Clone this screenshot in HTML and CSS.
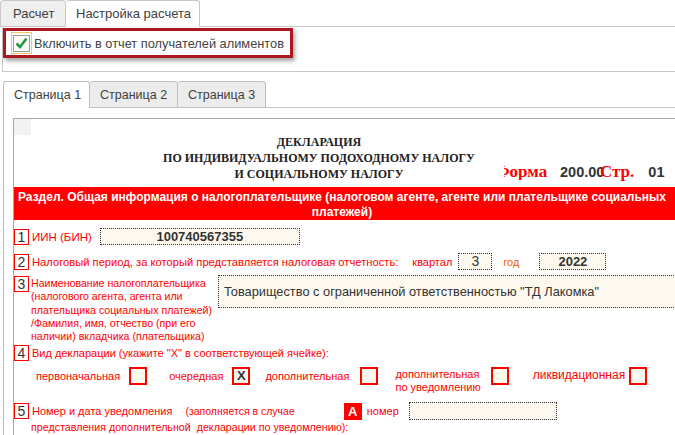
FILE: index.html
```html
<!DOCTYPE html>
<html lang="ru">
<head>
  <meta charset="UTF-8">
  <title>Декларация 200.00</title>
  <link rel="stylesheet" href="styles.css">
</head>
<body>
  <div class="window">
    <!-- верхние вкладки -->
    <div class="top-tabs">
      <div class="tab">Расчет</div>
      <div class="tab active">Настройка расчета</div>
      <div class="tab-fill"></div>
    </div>

    <div class="settings">
      <div class="highlight">
        <span class="check">
          <svg width="17" height="17" viewBox="0 0 17 17">
            <rect x="0.5" y="0.5" width="16" height="16" fill="#fff" stroke="#9a9a9a"/>
            <path d="M3.5 8.5 L7 12 L13.5 3.5" fill="none" stroke="#1f9a3c" stroke-width="2.6"/>
          </svg>
        </span>
        <span class="check-label">Включить в отчет получателей алиментов</span>
      </div>
    </div>

    <!-- вкладки страниц -->
    <div class="page-tabs">
      <div class="ptab active">Страница 1</div>
      <div class="ptab">Страница 2</div>
      <div class="ptab">Страница 3</div>
      <div class="tab-fill"></div>
    </div>

    <div class="page-panel">
      <div class="form">
        <div class="corner"></div>
        <div class="title">
          <div>ДЕКЛАРАЦИЯ</div>
          <div>ПО ИНДИВИДУАЛЬНОМУ ПОДОХОДНОМУ НАЛОГУ</div>
          <div class="title-last">
            <span>И СОЦИАЛЬНОМУ НАЛОГУ</span>
            <span class="form-no">
              <span class="form-word"><span class="form-word-in">Форма</span></span>
              <span class="form-val">200.00</span>
              <span class="form-str">Стр.</span>
              <span class="form-page">01</span>
            </span>
          </div>
        </div>

        <div class="section-bar">Раздел. Общая информация о налогоплательщике (налоговом агенте, агенте или плательщике социальных платежей)</div>

        <div class="row row-1">
          <span class="num">1</span>
          <span class="lbl lbl-big">ИИН (БИН)</span>
          <span class="field iin">100740567355</span>
        </div>

        <div class="row row-2">
          <span class="num">2</span>
          <span class="lbl period">Налоговый период, за который представляется налоговая отчетность:</span>
          <span class="lbl kv">квартал</span>
          <span class="field quarter">3</span>
          <span class="lbl year-lbl">год</span>
          <span class="field year">2022</span>
        </div>

        <div class="row row-3">
          <span class="num">3</span>
          <span class="lbl name-lbl">Наименование налогоплательщика<br>(налогового агента, агента или<br>плательщика социальных платежей)<br>/Фамилия, имя, отчество (при его<br>наличии) вкладчика (плательщика)</span>
          <span class="field name">Товарищество с ограниченной ответственностью "ТД Лакомка"</span>
        </div>

        <div class="row row-4">
          <span class="num">4</span>
          <span class="lbl">Вид декларации (укажите "X" в соответствующей ячейке):</span>
        </div>

        <div class="kinds">
          <span class="lbl k1">первоначальная</span>
          <span class="mark"></span>
          <span class="lbl k2">очередная</span>
          <span class="mark">X</span>
          <span class="lbl k3">дополнительная</span>
          <span class="mark"></span>
          <span class="lbl k4">дополнительная<br>по уведомлению</span>
          <span class="mark"></span>
          <span class="lbl k5">ликвидационная</span>
          <span class="mark"></span>
        </div>

        <div class="row row-5">
          <span class="num">5</span>
          <span class="lbl notice-lbl">Номер и дата уведомления</span>
          <span class="lbl note">(заполняется в случае</span>
          <span class="letter">А</span>
          <span class="lbl nomer">номер</span>
          <span class="field notice"></span>
        </div>
        <div class="row row-5b">
          <span class="lbl note2">представления дополнительной&nbsp; декларации по уведомлению):</span>
          <span class="under"></span>
          <span class="dots"></span>
        </div>
      </div>
    </div>
  </div>
</body>
</html>
```

FILE: styles.css
```css
/* базовые настройки */
body {
  margin: 0;
  padding: 0;
  font-family: "Liberation Sans", Arial, sans-serif;
  color: #333;
  background-color: #fff;
}

.window {
  width: 675px;
  height: 435px;
  overflow: hidden;
}

/* верхние вкладки */
.top-tabs {
  display: flex;
  height: 27px;
}

.tab {
  box-sizing: border-box;
  width: 66px;
  height: 27px;
  padding-left: 12px;
  line-height: 26px;
  font-size: 13px;
  color: #404040;
  white-space: nowrap;
  background-color: #efefef;
  border: 1px solid #c8c8c8;
  border-radius: 3px 3px 0 0;
}

.tab.active {
  width: 134px;
  padding-left: 10px;
  background-color: #fff;
  border-bottom: none;
  border-left: none;
}

.tab-fill {
  flex: 1;
  border-bottom: 1px solid #c8c8c8;
}

.settings {
  margin-left: 2px;
  height: 43px;
  border-left: 1px solid #c8c8c8;
  border-bottom: 1px solid #c8c8c8;
}

.highlight {
  display: flex;
  align-items: center;
  box-sizing: border-box;
  width: 290px;
  height: 30px;
  margin-top: 1px;
  border: 3px solid #ad1820;
  box-shadow: 2px 3px 4px rgba(0, 0, 0, 0.35);
}

.check {
  display: flex;
  align-items: center;
  justify-content: center;
  box-sizing: border-box;
  width: 21px;
  height: 22px;
  margin-left: 5px;
  border: 1px solid #efc766;
}

.check-label {
  margin-left: 2px;
  font-size: 12.8px;
  color: #444;
  white-space: nowrap;
}

/* вкладки страниц */
.page-tabs {
  display: flex;
  height: 27px;
  margin-top: 9px;
  padding-left: 3px;
}

.ptab {
  box-sizing: border-box;
  width: 88px;
  height: 27px;
  padding-left: 10px;
  line-height: 26px;
  font-size: 12.5px;
  color: #404040;
  white-space: nowrap;
  background-color: #ececec;
  border: 1px solid #c0c0c0;
  border-left: none;
  border-radius: 3px 3px 0 0;
}

.ptab.active {
  width: 87px;
  background-color: #fff;
  border-left: 1px solid #c0c0c0;
  border-bottom: none;
}

.page-panel {
  margin-left: 3px;
  padding: 10px 0 0 9px;
  border-left: 1px solid #c0c0c0;
  height: 400px;
}

/* бланк декларации */
.form {
  position: relative;
  width: 720px;
  height: 330px;
  border: 1px solid #a8a8a8;
}

.corner {
  position: absolute;
  left: 0;
  top: 0;
  width: 17px;
  height: 16px;
  background-color: #f2f2f2;
}

.title {
  width: 610px;
  padding-top: 15px;
  font-family: "Liberation Serif", "Times New Roman", serif;
  font-weight: bold;
  font-size: 12px;
  line-height: 16px;
  text-align: center;
  color: #222;
}

.title-last {
  position: relative;
}

/* номер формы поверх заголовка */
.form-no {
  position: absolute;
  left: 490px;
  top: -2px;
  display: flex;
  align-items: baseline;
  white-space: nowrap;
  text-align: left;
}

.form-word {
  display: block;
  width: 46px;
  overflow: hidden;
  font-size: 17px;
  color: #f00;
}

.form-word-in {
  display: block;
  margin-left: -9px;
}

.form-val {
  width: 40px;
  margin-left: 10px;
  font-family: "Liberation Sans", Arial, sans-serif;
  font-weight: bold;
  font-size: 14.5px;
  color: #333;
}

.form-str {
  font-size: 17px;
  color: #f00;
}

.form-page {
  margin-left: 14px;
  font-family: "Liberation Sans", Arial, sans-serif;
  font-weight: bold;
  font-size: 14.5px;
  color: #333;
}

.section-bar {
  box-sizing: border-box;
  width: 720px;
  height: 33px;
  margin-top: 5px;
  padding: 3px 64px 0 0;
  background-color: #f00;
  color: #fff;
  font-weight: bold;
  font-size: 12px;
  line-height: 15px;
  text-align: center;
}

.row {
  display: flex;
  align-items: center;
}

.num {
  flex-shrink: 0;
  box-sizing: border-box;
  width: 15px;
  height: 16px;
  border: 1px solid #f00;
  font-size: 14px;
  line-height: 14px;
  text-align: center;
  color: #333;
}

.lbl {
  color: #f00;
  font-size: 11px;
  white-space: nowrap;
}

.row .lbl {
  margin-left: 3px;
}

.field {
  box-sizing: border-box;
  border: 1px dotted #333;
  background-color: #fdf9ef;
  font-size: 14px;
  color: #333;
}

.row-1 {
  height: 17px;
  margin-top: 8px;
}

.row .lbl-big {
  font-size: 11.5px;
}

.iin {
  width: 200px;
  height: 17px;
  margin-left: 8px;
  line-height: 15px;
  text-align: center;
  font-weight: bold;
  font-size: 13px;
}

.row-2 {
  height: 17px;
  margin-top: 8px;
}

.row .period {
  font-size: 11.2px;
}

.row .kv {
  margin-left: 14px;
}

.quarter {
  width: 34px;
  height: 17px;
  margin-left: 6px;
  line-height: 15px;
  text-align: center;
}

.row .year-lbl {
  margin-left: 11px;
  color: #f35a00;
}

.year {
  width: 67px;
  height: 17px;
  margin-left: 20px;
  line-height: 15px;
  text-align: center;
  font-weight: bold;
  font-size: 13px;
}

.row-3 {
  align-items: flex-start;
  margin-top: 6px;
}

.row .name-lbl {
  width: 187px;
  margin-left: 2px;
  margin-top: 1px;
  font-size: 10.6px;
  line-height: 13.3px;
}

.name {
  flex: 1;
  height: 33px;
  margin-top: -1px;
  padding-left: 5px;
  line-height: 31px;
  font-size: 12.8px;
  white-space: nowrap;
}

.row-4 {
  height: 16px;
  margin-top: 2px;
}

/* варианты вида декларации */
.kinds {
  display: flex;
  align-items: flex-start;
  height: 30px;
  margin-top: 6px;
  padding-left: 22px;
}

.mark {
  box-sizing: border-box;
  width: 18px;
  height: 18px;
  border: 2px solid #f00;
  background-color: #fdf9ef;
  font-size: 13px;
  font-weight: bold;
  line-height: 14px;
  text-align: center;
  color: #333;
}

.kinds .lbl {
  margin-top: 3px;
  font-size: 11px;
  line-height: 13px;
}

.kinds .k1 { margin-right: 9px; }
.kinds .k2 { margin-left: 22px; margin-right: 9px; }
.kinds .k3 { margin-left: 15px; margin-right: 11px; }
.kinds .k4 { margin-left: 17px; margin-right: 10px; margin-top: 1px; }
.kinds .k5 { margin-left: 24px; margin-right: 4px; font-size: 12px; margin-top: 2px; }

.row-5 {
  height: 18px;
  margin-top: 5px;
}

.row .notice-lbl {
  font-size: 11px;
}

.row .note {
  margin-left: 13px;
  font-size: 10.5px;
}

.letter {
  width: 18px;
  height: 17px;
  margin-left: 49px;
  background-color: #f00;
  color: #fff;
  font-weight: bold;
  font-size: 13px;
  line-height: 17px;
  text-align: center;
}

.row .nomer {
  margin-left: 5px;
  font-size: 11px;
}

.notice {
  width: 148px;
  height: 18px;
  margin-left: 10px;
}

.row-5b {
  align-items: flex-start;
  height: 16px;
  margin-top: 1px;
}

.row-5b .note2 {
  margin-left: 17px;
  font-size: 10.7px;
}

.under {
  width: 18px;
  height: 15px;
  border-bottom: 2px solid #f00;
}

.dots {
  width: 82px;
  height: 15px;
  margin-left: 47px;
  border-bottom: 1px dotted #333;
}
```
